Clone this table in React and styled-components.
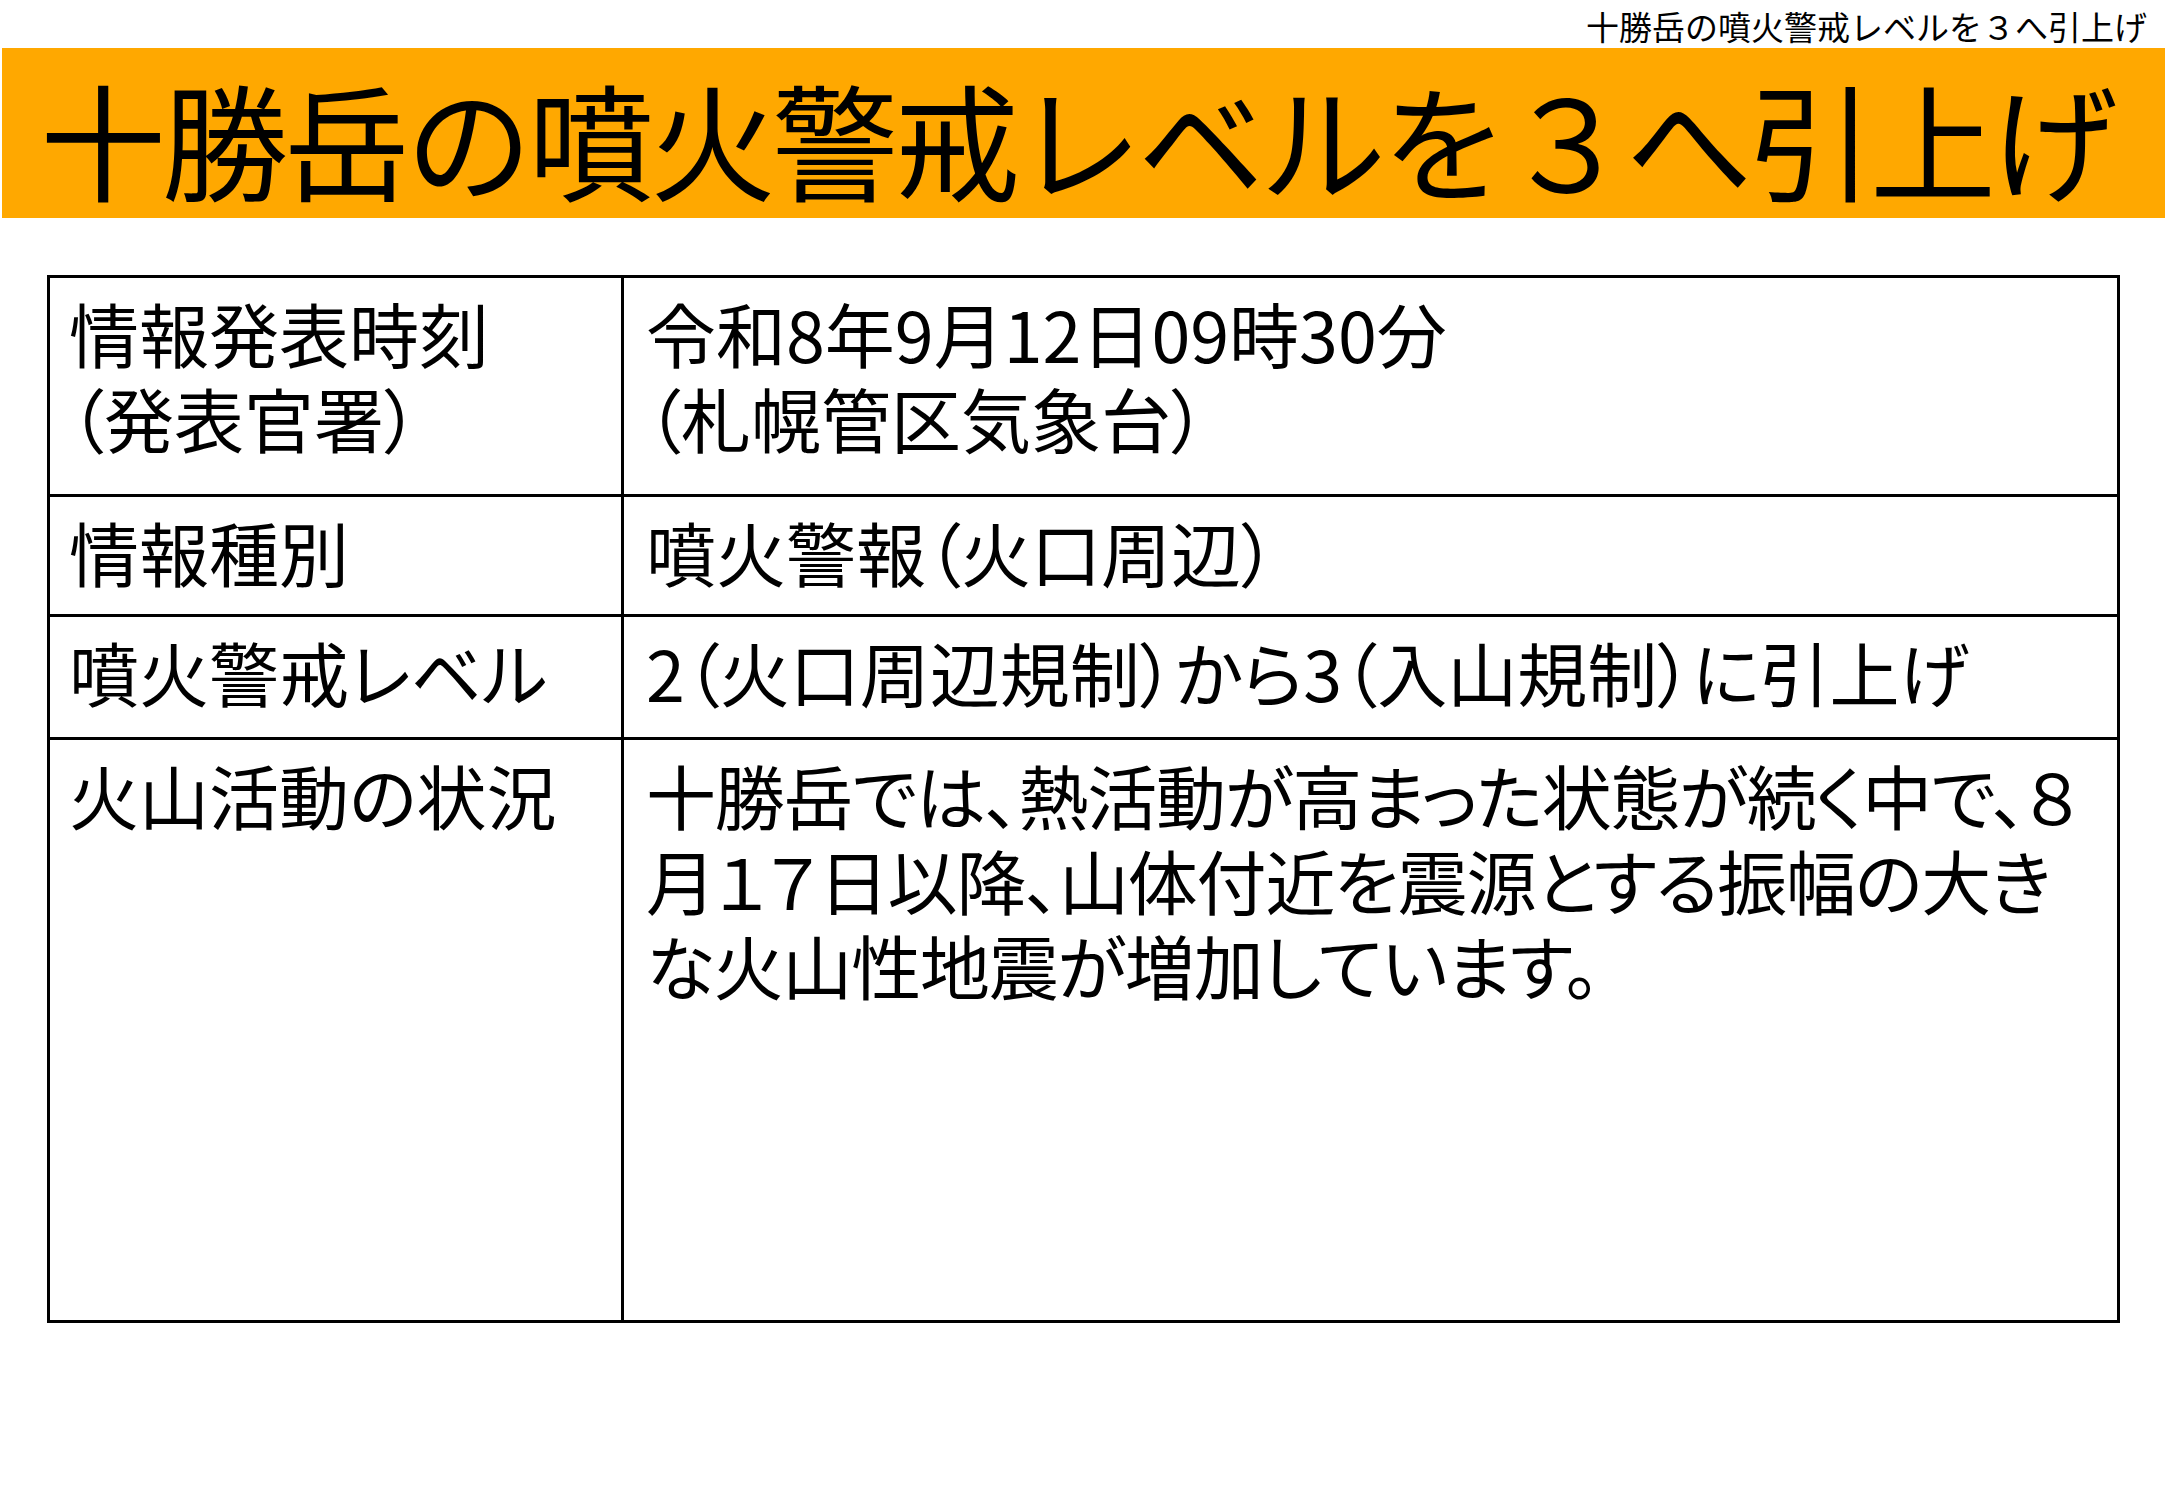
import React from 'react';
import styled, { createGlobalStyle } from 'styled-components';

const GlobalStyle = createGlobalStyle`
    html, body {
        margin: 0;
        padding: 0;
        background: #fff;
    }
    body {
        font-family: "Noto Sans CJK JP", "Noto Sans", sans-serif;
        color: #000;
    }
`

const Slide = styled.div`
    width: 2167px;
    height: 1500px;
    background: #fff;
    overflow: hidden;
`

const RunningHead = styled.div`
    height: 48px;
    display: flex;
    align-items: center;
    justify-content: flex-end;
    padding: 4px 20px 0 0;
    box-sizing: border-box;
    font-size: 33px;
    line-height: 1;
`

const TitleBand = styled.div`
    box-sizing: border-box;
    margin: 0 2px;
    height: 170px;
    padding: 8px 0 0 38px;
    display: flex;
    align-items: center;
    background: #ffa800;
`

const Title = styled.h1`
    margin: 0;
    font-size: 126px;
    font-weight: 400;
    line-height: 1;
    letter-spacing: -4px;
    white-space: nowrap;
`

const InfoTable = styled.div`
    box-sizing: border-box;
    width: 2073px;
    margin: 57px 0 0 47px;
    display: grid;
    grid-template-columns: 574px 1496px;
    grid-template-rows: 219px 120px 123px 583px;
    border-top: 3px solid #000;
    border-left: 3px solid #000;
`

const Cell = styled.div`
    box-sizing: border-box;
    padding: 12px 16px 0 ${props => props.$label ? 19 : 22}px;
    border-right: 3px solid #000;
    border-bottom: 3px solid #000;
    font-size: 70px;
    font-weight: 400;
    line-height: 85px;
    letter-spacing: ${props => props.$tight ? '-1.2px' : '0'};
    font-feature-settings: "palt";
    white-space: nowrap;
`

const rows = [
    {
        label: ['情報発表時刻', '（発表官署）'],
        value: ['令和8年9月12日09時30分', '（札幌管区気象台）'],
    },
    {
        label: ['情報種別'],
        value: ['噴火警報（火口周辺）'],
    },
    {
        label: ['噴火警戒レベル'],
        value: ['2（火口周辺規制）から3（入山規制）に引上げ'],
    },
    {
        label: ['火山活動の状況'],
        value: [
            '十勝岳では、熱活動が高まった状態が続く中で、８',
            '月１７日以降、山体付近を震源とする振幅の大き',
            'な火山性地震が増加しています。',
        ],
        tight: true,
    },
];

function Lines({lines}) {
    return lines.map((line, i) => (
        <React.Fragment key={i}>
            {i > 0 && <br/>}
            {line}
        </React.Fragment>
    ));
}

export default function App() {
    const title = '十勝岳の噴火警戒レベルを３へ引上げ';

    return (
        <Slide>
            <GlobalStyle/>
            <RunningHead>{title}</RunningHead>
            <TitleBand>
                <Title>{title}</Title>
            </TitleBand>
            <InfoTable>
                {rows.map((row, i) => (
                    <React.Fragment key={i}>
                        <Cell $label><Lines lines={row.label}/></Cell>
                        <Cell $tight={row.tight}><Lines lines={row.value}/></Cell>
                    </React.Fragment>
                ))}
            </InfoTable>
        </Slide>
    );
}
